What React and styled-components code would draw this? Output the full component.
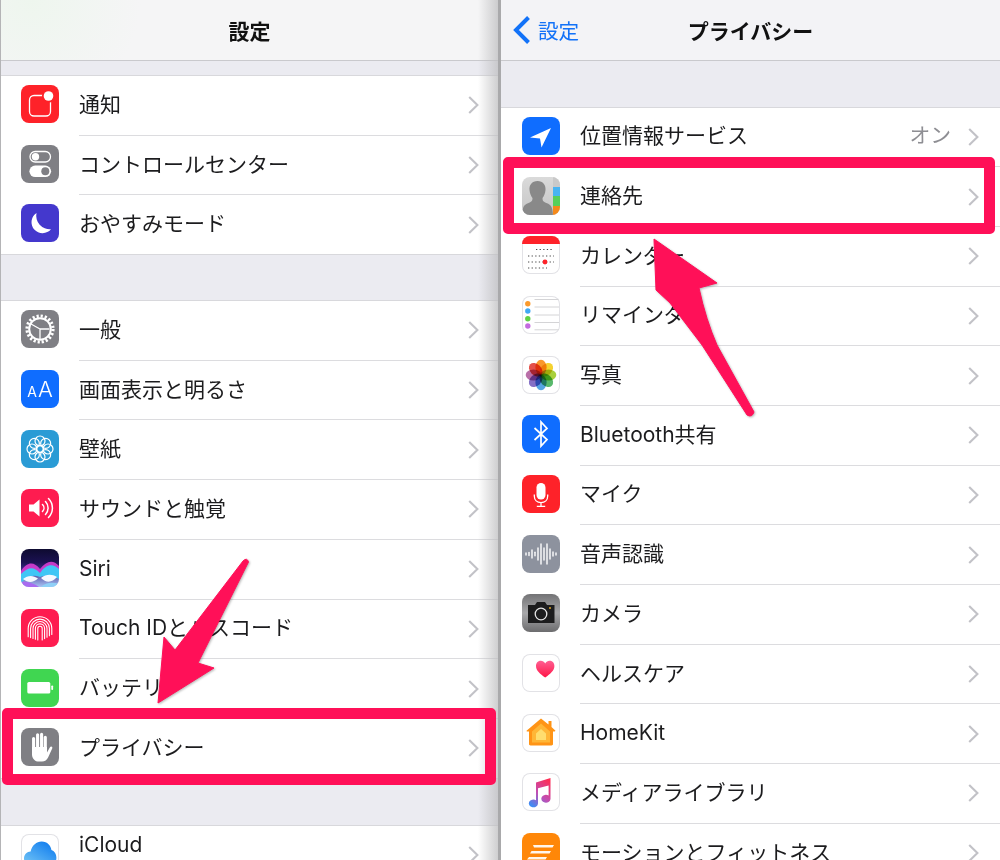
import React from 'react'
import styled, { createGlobalStyle } from 'styled-components'

const GlobalStyle = createGlobalStyle`
  html, body {
    margin: 0;
    padding: 0;
    background: #ebebf1;
    font-family: Inter, 'Noto Sans CJK JP', sans-serif;
  }
`

const Page = styled.div`
  position: relative;
  display: flex;
  width: 1000px;
  height: 860px;
  overflow: hidden;
  background: #ebebf1;
`

const Panel = styled.section`
  position: relative;
  flex: none;
  width: ${(p) => p.$width}px;
  height: 860px;
  overflow: hidden;
  box-sizing: border-box;
  border-left: ${(p) => (p.$lined ? '1px solid #b4b4b6' : 'none')};

  &::after {
    content: '';
    display: ${(p) => (p.$shaded ? 'block' : 'none')};
    position: absolute;
    top: 0;
    right: 0;
    bottom: 0;
    width: 20px;
    background: linear-gradient(to right, rgba(190, 190, 192, 0), rgba(190, 190, 192, 0.75));
  }
`

const Seam = styled.div`
  flex: none;
  width: 3px;
  background: #a9a9ab;
`

const NavBar = styled.header`
  display: grid;
  grid-template-columns: 1fr auto 1fr;
  align-items: center;
  height: 60px;
  box-sizing: content-box;
  border-bottom: 1.5px solid #c9c9cd;
  background: ${(p) =>
    p.$tinted
      ? 'radial-gradient(circle at 30px 0, #eef6ee, rgba(245, 245, 246, 0) 110px), #f5f5f6'
      : '#f3f3f6'};
`

const NavTitle = styled.h1`
  grid-column: 2;
  margin: 0;
  font-size: 21px;
  font-weight: 700;
  color: #111;
`

const BackLink = styled.a`
  grid-column: 1;
  display: flex;
  align-items: center;
  gap: 7px;
  padding-left: 12px;
  font-size: 20.6px;
  color: #1272f8;
`

const Group = styled.div`
  margin-top: ${(p) => p.$top}px;
  display: grid;
  grid-auto-rows: 59.7px;
  background: #fff;
  border-top: 1.5px solid #d8d8dc;
`

const Row = styled.div`
  display: flex;
  align-items: center;
  box-sizing: border-box;
  padding-left: ${(p) => p.$inset}px;
  background: #fff;
  border-bottom: ${(p) => (p.$last ? '1.5px solid #d8d8dc' : 'none')};
`

const Tile = styled.div`
  flex: none;
  width: 38px;
  height: 38px;
  margin-bottom: 3px;
  border-radius: 8px;
  overflow: hidden;
  box-sizing: border-box;
  background: ${(p) => p.$bg || '#fff'};
  box-shadow: ${(p) => (p.$bg ? 'none' : 'inset 0 0 0 1px #e2e2e6')};

  svg {
    display: block;
  }
`

const TextTile = styled(Tile)`
  display: flex;
  align-items: baseline;
  justify-content: center;
  gap: 1px;
  color: #fff;
  font-family: Inter, sans-serif;
  line-height: 39px;
`

const SmallA = styled.span`
  font-size: 14px;
`

const BigA = styled.span`
  font-size: 22px;
  font-weight: 300;
`

const RowBody = styled.div`
  flex: 1;
  align-self: stretch;
  display: flex;
  align-items: center;
  margin-left: 20px;
  padding-right: ${(p) => p.$edge}px;
  padding-bottom: 3px;
  min-width: 0;
  border-bottom: ${(p) => (p.$last ? 'none' : '1.5px solid #dcdcdf')};
`

const Label = styled.span`
  flex: 1;
  padding-top: 2px;
  padding-bottom: ${(p) => (p.$raised ? 18 : 0)}px;
  font-size: 21px;
  line-height: 28px;
  color: #1c1c1e;
  white-space: nowrap;
`

const Value = styled.span`
  margin-right: 17px;
  padding-top: 2px;
  font-size: 20.8px;
  line-height: 28px;
  color: #8e8e93;
`

const ChevronSlot = styled.svg`
  flex: none;
  margin-top: 3px;
`

const Highlight = styled.div`
  position: absolute;
  top: ${(p) => p.$top}px;
  left: ${(p) => p.$left}px;
  width: ${(p) => p.$w}px;
  height: ${(p) => p.$h}px;
  box-sizing: border-box;
  border: 11px solid #ff1058;
  border-radius: 5px;
`

const Arrows = styled.svg`
  position: absolute;
  top: 0;
  left: 0;
  filter: drop-shadow(1px 1px 1px rgba(0, 0, 0, 0.28));
  pointer-events: none;
`

const Petal = styled.ellipse`
  mix-blend-mode: multiply;
`

const Chevron = () => (
  <ChevronSlot width="11" height="18" viewBox="0 0 11 18" fill="none" stroke="#c2c2c7" strokeWidth="2.1">
    <path d="M1.2 1 L9.4 9 L1.2 17" />
  </ChevronSlot>
)

const BackChevron = () => (
  <svg width="18" height="28" viewBox="0 0 18 28" fill="none" stroke="#1272f8" strokeWidth="4">
    <path d="M15.5 1.5 L3 14 L15.5 26.5" />
  </svg>
)

const Svg = ({ children }) => (
  <svg width="38" height="38" viewBox="0 0 38 38">
    {children}
  </svg>
)

const NotifyIcon = () => (
  <Tile $bg="#fe2229">
    <Svg>
      <rect x="8.5" y="10.5" width="21" height="20.5" rx="4.5" fill="none" stroke="#fff" strokeWidth="1.3" />
      <circle cx="27.5" cy="11" r="6.6" fill="#fe2229" />
      <circle cx="27.5" cy="11" r="4.8" fill="#fff" />
    </Svg>
  </Tile>
)

const ControlIcon = () => (
  <Tile $bg="#7f7f84">
    <Svg>
      <rect x="9" y="6.5" width="20.5" height="10.5" rx="5.2" fill="none" stroke="#fff" strokeWidth="1.3" />
      <circle cx="14.5" cy="11.8" r="3.7" fill="#fff" />
      <rect x="8.4" y="20.5" width="21.7" height="11.6" rx="5.8" fill="#fff" />
      <circle cx="24.3" cy="26.3" r="4" fill="#7f7f84" />
    </Svg>
  </Tile>
)

const MoonIcon = () => (
  <Tile $bg="#4438cd">
    <Svg>
      <path d="M15.5 9 A11 11 0 1 0 30 25.2 A13.5 13.5 0 0 1 15.5 9 Z" fill="#fff" />
    </Svg>
  </Tile>
)

const GearIcon = () => (
  <Tile $bg="#7f7f84">
    <Svg>
      <circle cx="19" cy="19" r="13" fill="none" stroke="#fff" strokeWidth="3.2" strokeDasharray="2.2 1.9" />
      <circle cx="19" cy="19" r="10.8" fill="none" stroke="#fff" strokeWidth="2" />
      <path d="M19 19 L10 14 M19 19 L28.5 19 M19 19 L19 29.5" stroke="#fff" strokeWidth="1.3" />
    </Svg>
  </Tile>
)

const DisplayIcon = () => (
  <TextTile $bg="#0f6dff">
    <SmallA>A</SmallA>
    <BigA>A</BigA>
  </TextTile>
)

const WallpaperIcon = () => (
  <Tile $bg="#2a9bd5">
    <Svg>
      {[0, 45, 90, 135, 180, 225, 270, 315].map((a) => (
        <circle key={a} cx="19" cy="11" r="5" fill="none" stroke="#fff" strokeWidth="1.2" transform={`rotate(${a} 19 19)`} />
      ))}
      <circle cx="19" cy="19" r="3.6" fill="none" stroke="#fff" strokeWidth="1.2" />
    </Svg>
  </Tile>
)

const SoundIcon = () => (
  <Tile $bg="#fe1c50">
    <Svg>
      <path d="M8 15.5 h4.5 l6 -5 v17 l-6 -5 h-4.5 Z" fill="#fff" />
      <path d="M21.5 15.5 a5 5 0 0 1 0 7 M24.5 12.5 a9.5 9.5 0 0 1 0 13 M27.5 9.5 a13.5 13.5 0 0 1 0 19" fill="none" stroke="#fff" strokeWidth="1.5" strokeLinecap="round" />
    </Svg>
  </Tile>
)

const SiriIcon = () => (
  <Tile $bg="linear-gradient(#0e0b30, #1b1152 35%, #3a2a8a 55%, #a9c4f4)">
    <Svg>
      <path d="M0 22 C7 12 13 13 19 20 C25 12 32 10 38 17 L38 28 C30 22 25 22 19 26 C12 21 6 23 0 32 Z" fill="#e040d8" opacity="0.85" />
      <path d="M0 25 C8 17 13 18 19 24 C25 15 32 14 38 20 L38 30 C30 26 25 26 19 28 C12 25 6 27 0 34 Z" fill="#3fc6f5" />
      <path d="M2 30 C7 26 12 26 17 29.5 C12 34 7 34 2 30 Z M20 29 C25 25 31 25 36 28 C31 34 25 34 20 29 Z" fill="#f4f8ff" />
      <path d="M0 33 C5 32 13 34 18 38 L0 38 Z" fill="#a86cf0" />
      <path d="M20 38 C25 33 32 33 38 35 L38 38 Z" fill="#8fd0f7" />
    </Svg>
  </Tile>
)

const TouchIcon = () => (
  <Tile $bg="#fe1c50">
    <Svg>
      {[2.2, 4.6, 7, 9.4, 11.8].map((r, i) => (
        <path
          key={r}
          d={`M${19 - r} ${31 - i * 0.8} V19.5 a${r} ${r} 0 0 1 ${2 * r} 0 V${31 - i * 1.4}`}
          fill="none"
          stroke="#fff"
          strokeWidth="1.1"
          strokeLinecap="round"
        />
      ))}
    </Svg>
  </Tile>
)

const BatteryIcon = () => (
  <Tile $bg="#40d651">
    <Svg>
      <rect x="6.3" y="13" width="23" height="11.5" rx="1.6" fill="#fff" />
      <rect x="30.3" y="16.5" width="1.8" height="4.5" rx="0.8" fill="#fff" />
    </Svg>
  </Tile>
)

const HandIcon = () => (
  <Tile $bg="#7f7f84">
    <Svg>
      <path d="M12.6 20 V10.5 M16.6 20 V6.8 M20.6 20 V6.3 M24.3 21 V9.3" stroke="#fff" strokeWidth="3.1" strokeLinecap="round" />
      <path d="M11 19 H26 V24.5 L28.8 19.4 C29.8 17.6 32 18.6 31.2 20.5 L27.2 29.2 C26 32 23.8 33.6 21 33.6 H18 C14 33.6 11 30.4 11 26.4 Z" fill="#fff" />
    </Svg>
  </Tile>
)

const LocationIcon = () => (
  <Tile $bg="#0f6dff">
    <Svg>
      <path d="M29 11 L8 20.5 L18 21.5 L19.5 30.5 Z" fill="#fff" />
    </Svg>
  </Tile>
)

const ContactsIcon = () => (
  <Tile $bg="linear-gradient(#dadada, #c6c6c6)">
    <Svg>
      <path d="M15.5 4 C21 4 24 8 23.5 13 C23.2 16.5 22 19 20.5 21 C20.5 24 21.5 25 25 26.2 C28.5 27.5 30.5 29 31 38 H0 C0.5 29 2.5 27.5 6 26.2 C9.5 25 10.5 24 10.5 21 C9 19 7.8 16.5 7.5 13 C7 8 10 4 15.5 4 Z" fill="#898989" />
      <rect x="31" y="0" width="7" height="10" fill="#c9c9c9" />
      <rect x="31" y="10" width="7" height="9" fill="#48b4f2" />
      <rect x="31" y="19" width="7" height="10" fill="#57cf5b" />
      <rect x="31" y="29" width="7" height="9" fill="#f5891b" />
    </Svg>
  </Tile>
)

const CalendarIcon = () => (
  <Tile>
    <Svg>
      <rect x="0" y="0" width="38" height="8" fill="#fe2229" />
      <path d="M14 13.5 H32 M6 20 H32 M6 26 H32 M6 32 H25" stroke="#4a4a4a" strokeWidth="1.2" strokeDasharray="1.3 2.3" />
      <circle cx="23" cy="26" r="2.4" fill="#fe2229" />
    </Svg>
  </Tile>
)

const RemindersIcon = () => (
  <Tile>
    <Svg>
      <path d="M12.5 3.5 H37 M12.5 11 H37 M12.5 19 H37 M12.5 26.5 H37 M12.5 33.8 H37" stroke="#d4d4d6" strokeWidth="1" />
      <circle cx="5.8" cy="7.8" r="2.7" fill="#fb9a2c" />
      <circle cx="5.8" cy="15" r="2.7" fill="#3fa9f5" />
      <circle cx="5.8" cy="22.7" r="2.7" fill="#5fd145" />
      <circle cx="5.8" cy="30" r="2.7" fill="#c46be0" />
    </Svg>
  </Tile>
)

const PETALS = ['#f9982b', '#f5d22f', '#a9d03b', '#58b86c', '#55a5e2', '#8470c6', '#b96fa8', '#e4504a']

const PhotosIcon = () => (
  <Tile>
    <Svg>
      {PETALS.map((c, i) => (
        <Petal key={c} cx="19" cy="11.5" rx="5.6" ry="7.8" fill={c} transform={`rotate(${i * 45} 19 19)`} />
      ))}
    </Svg>
  </Tile>
)

const BluetoothIcon = () => (
  <Tile $bg="#0f6dff">
    <Svg>
      <path d="M12.5 13 L25 24.5 L19 31 V7 L25 13.5 L12.5 25" fill="none" stroke="#fff" strokeWidth="1.7" />
    </Svg>
  </Tile>
)

const MicIcon = () => (
  <Tile $bg="#fe2229">
    <Svg>
      <rect x="14.5" y="8" width="9" height="16.5" rx="4.5" fill="#fff" />
      <path d="M12.3 19.5 V21 C12.3 25 15 27.6 19 27.6 C23 27.6 25.7 25 25.7 21 V19.5 M19 27.6 V31 M14.8 31.3 H23.2" fill="none" stroke="#fff" strokeWidth="1.3" />
    </Svg>
  </Tile>
)

const SPEECH_BARS = [1, 1.6, 4, 1.8, 6, 10, 6, 10, 5, 2, 1]

const SpeechIcon = () => (
  <Tile $bg="#8d929e">
    <Svg>
      {SPEECH_BARS.map((h, i) => (
        <line key={i} x1={4 + i * 3} x2={4 + i * 3} y1={19 - h} y2={19 + h} stroke="#fff" strokeWidth="1.4" strokeLinecap="round" />
      ))}
    </Svg>
  </Tile>
)

const CameraIcon = () => (
  <Tile $bg="linear-gradient(#737375, #a8a8aa 50%, #6c6c6e)">
    <Svg>
      <path d="M6 11 H13 L15 8 H23 L25 11 H32.5 V29 H6 Z" fill="#1c1c1d" />
      <circle cx="19" cy="20" r="5.8" fill="none" stroke="#e4e4e4" strokeWidth="1.3" />
      <circle cx="28" cy="14" r="0.9" fill="#f0b429" />
    </Svg>
  </Tile>
)

const HealthIcon = () => (
  <Tile>
    <Svg>
      <defs>
        <linearGradient id="heart" x1="0" y1="0" x2="0" y2="1">
          <stop offset="0" stopColor="#ff5f92" />
          <stop offset="1" stopColor="#ff1546" />
        </linearGradient>
      </defs>
      <path d="M23.2 23.6 C18 19.6 14 16.6 14 12 C14 8.6 16.4 6.8 18.8 6.8 C20.6 6.8 22.2 7.8 23.2 9.4 C24.2 7.8 25.8 6.8 27.6 6.8 C30 6.8 32.4 8.6 32.4 12 C32.4 16.6 28.4 19.6 23.2 23.6 Z" fill="url(#heart)" />
    </Svg>
  </Tile>
)

const HomeIcon = () => (
  <Tile>
    <Svg>
      <path d="M19 4.5 L26.5 10.5 V7 H29.5 V13 L33.5 16.8 L32.8 17.6 H31 V30 C31 31 30.3 31.4 29.5 31.4 H8.5 C7.7 31.4 7 31 7 30 V17.6 H4.8 L4.5 16.8 Z" fill="#ff9416" />
      <path d="M19 9.5 L28 17.5 V28.5 H10 V17.5 Z" fill="#ffb637" />
      <path d="M19 15 L24 19.5 V26 H14 V19.5 Z" fill="#ffdd6e" />
    </Svg>
  </Tile>
)

const MusicIcon = () => (
  <Tile>
    <Svg>
      <defs>
        <linearGradient id="note" x1="0.8" y1="0" x2="0.2" y2="1">
          <stop offset="0" stopColor="#ff2d55" />
          <stop offset="0.55" stopColor="#c04fb4" />
          <stop offset="1" stopColor="#3d8df5" />
        </linearGradient>
      </defs>
      <path d="M14 9.5 L28.5 5 V26 A4.6 3.9 0 1 1 26.6 22.6 V12.5 L16 15.3 V30.5 A4.6 3.9 0 1 1 14 27.2 Z" fill="url(#note)" />
    </Svg>
  </Tile>
)

const MotionIcon = () => (
  <Tile $bg="#ff8708">
    <Svg>
      <path d="M11 12 H32 L30.5 14.5 H12 Z M9.5 18 H29 L27.5 20.5 H8 Z M7 24 H25 L23.5 26.5 H5 Z M5 30 H22 L21 33 H3 Z" fill="#fff" opacity="0.92" />
    </Svg>
  </Tile>
)

const CloudIcon = () => (
  <Tile>
    <Svg>
      <defs>
        <linearGradient id="cloud" x1="0.9" y1="0" x2="0.1" y2="1">
          <stop offset="0" stopColor="#0a78ee" />
          <stop offset="1" stopColor="#74c6f6" />
        </linearGradient>
      </defs>
      <path d="M11 32 C6 32 3 28.5 3 24.6 C3 20.6 6 17.6 9.6 17.6 C11 11 15.6 7.4 20.6 7.4 C26.4 7.4 30 11.6 30.4 16 C33.4 17 35.4 20 35.4 23.8 C35.4 28.4 32 32 27.6 32 Z" fill="url(#cloud)" />
    </Svg>
  </Tile>
)

const GROUP_NOTIFY = [
  { icon: NotifyIcon, label: '通知' },
  { icon: ControlIcon, label: 'コントロールセンター' },
  { icon: MoonIcon, label: 'おやすみモード' },
]

const GROUP_GENERAL = [
  { icon: GearIcon, label: '一般' },
  { icon: DisplayIcon, label: '画面表示と明るさ' },
  { icon: WallpaperIcon, label: '壁紙' },
  { icon: SoundIcon, label: 'サウンドと触覚' },
  { icon: SiriIcon, label: 'Siri' },
  { icon: TouchIcon, label: 'Touch IDとパスコード' },
  { icon: BatteryIcon, label: 'バッテリー' },
  { icon: HandIcon, label: 'プライバシー' },
]

const GROUP_ACCOUNT = [{ icon: CloudIcon, label: 'iCloud', raised: true }]

const GROUP_PRIVACY = [
  { icon: LocationIcon, label: '位置情報サービス', value: 'オン' },
  { icon: ContactsIcon, label: '連絡先' },
  { icon: CalendarIcon, label: 'カレンダー' },
  { icon: RemindersIcon, label: 'リマインダー' },
  { icon: PhotosIcon, label: '写真' },
  { icon: BluetoothIcon, label: 'Bluetooth共有' },
  { icon: MicIcon, label: 'マイク' },
  { icon: SpeechIcon, label: '音声認識' },
  { icon: CameraIcon, label: 'カメラ' },
  { icon: HealthIcon, label: 'ヘルスケア' },
  { icon: HomeIcon, label: 'HomeKit' },
  { icon: MusicIcon, label: 'メディアライブラリ' },
  { icon: MotionIcon, label: 'モーションとフィットネス' },
]

const SettingsGroup = ({ items, top, inset, edge }) => (
  <Group $top={top}>
    {items.map(({ icon: Icon, label, value, raised }, i) => {
      const last = i === items.length - 1
      return (
        <Row key={label} $inset={inset} $last={last}>
          <Icon />
          <RowBody $edge={edge} $last={last}>
            <Label $raised={raised}>{label}</Label>
            {value && <Value>{value}</Value>}
            <Chevron />
          </RowBody>
        </Row>
      )
    })}
  </Group>
)

const App = () => (
  <Page>
    <GlobalStyle />
    <Panel $width={498} $lined $shaded>
      <NavBar $tinted>
        <NavTitle>設定</NavTitle>
      </NavBar>
      <SettingsGroup items={GROUP_NOTIFY} top={14} inset={20} edge={19} />
      <SettingsGroup items={GROUP_GENERAL} top={45} inset={20} edge={19} />
      <SettingsGroup items={GROUP_ACCOUNT} top={46} inset={20} edge={19} />
    </Panel>
    <Seam />
    <Panel $width={499}>
      <NavBar>
        <BackLink>
          <BackChevron />
          設定
        </BackLink>
        <NavTitle>プライバシー</NavTitle>
      </NavBar>
      <SettingsGroup items={GROUP_PRIVACY} top={45.5} inset={21} edge={21} />
    </Panel>
    <Highlight $top={708} $left={2} $w={494} $h={77} />
    <Highlight $top={157} $left={503} $w={492} $h={77} />
    <Arrows width="1000" height="860" viewBox="0 0 1000 860">
      <path
        d="M243 561 Q247 557 248.5 562 L198 663 L214 668 L158 703 L164 637 L175 650 Z"
        fill="#ff1058"
        stroke="#ff1058"
        strokeLinejoin="round"
      />
      <path
        d="M654 239 L717 283 L699 288 Q706 320 717 345 L754 412 Q752 418 747 415 L702 345 L670 303 L656 290 Z"
        fill="#ff1058"
        stroke="#ff1058"
        strokeLinejoin="round"
      />
    </Arrows>
  </Page>
)

export default App
